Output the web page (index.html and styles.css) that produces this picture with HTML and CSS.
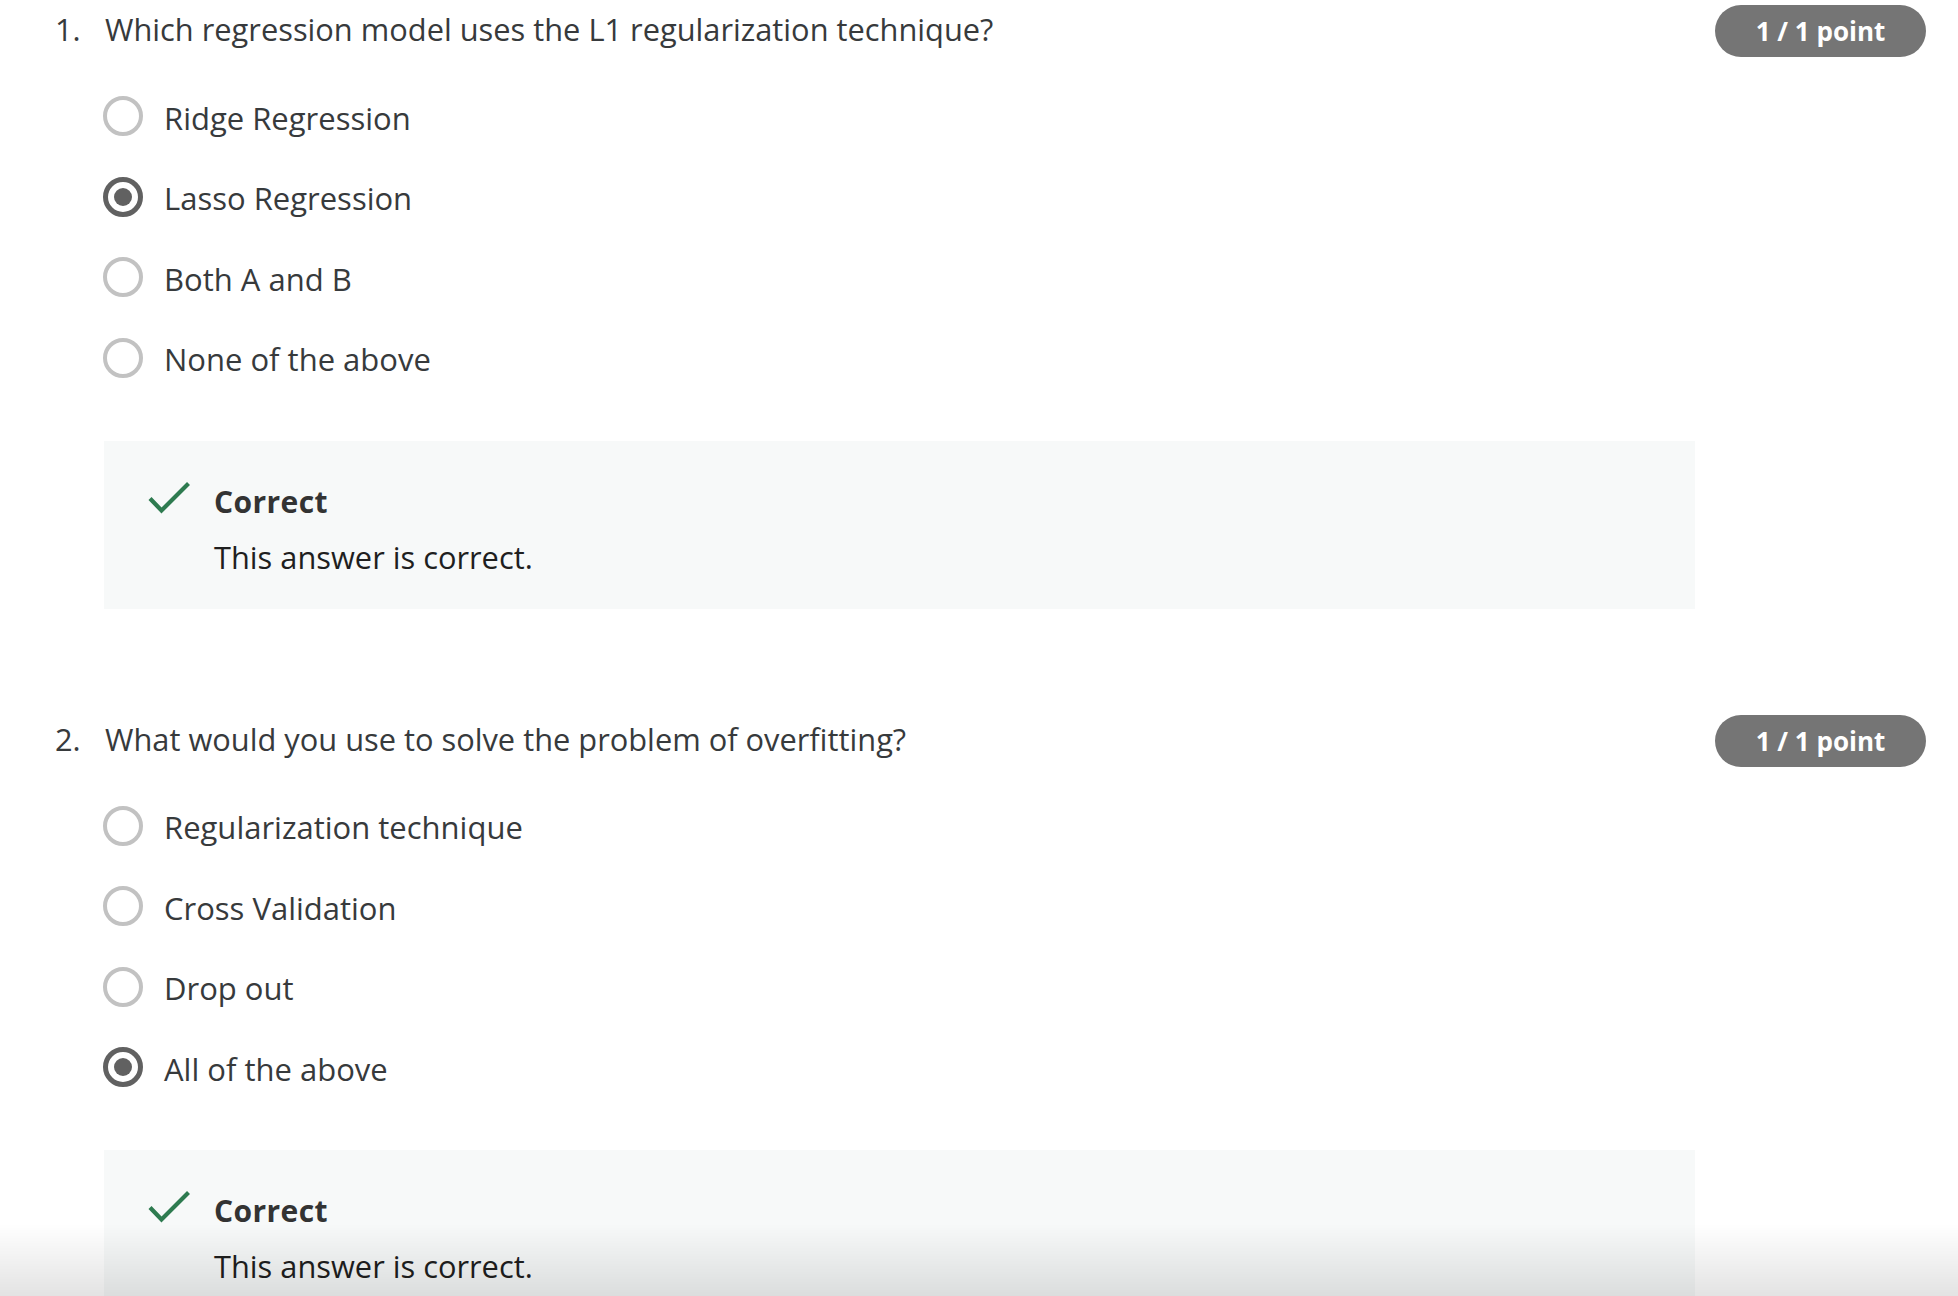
FILE: index.html
```html
<!DOCTYPE html>
<html lang="en">
<head>
<meta charset="utf-8">
<title>Quiz results</title>
<link rel="stylesheet" href="styles.css">
</head>
<body>
<main class="quiz">
  <section class="question">
    <div class="q-head">
      <div class="q-title"><span class="q-num">1.</span><span class="q-text">Which regression model uses the L1 regularization technique?</span></div>
      <div class="badge">1 / 1 point</div>
    </div>
    <ul class="options">
      <li class="option"><span class="radio"></span><span class="opt-text">Ridge Regression</span></li>
      <li class="option"><span class="radio checked"></span><span class="opt-text">Lasso Regression</span></li>
      <li class="option"><span class="radio"></span><span class="opt-text">Both A and B</span></li>
      <li class="option"><span class="radio"></span><span class="opt-text">None of the above</span></li>
    </ul>
    <div class="feedback">
      <svg class="check" width="42" height="32" viewBox="0 0 42 32"><path d="M2 16.5 L13.5 28.5 L40.5 1.5" fill="none" stroke="#2e7b50" stroke-width="4.2"/></svg>
      <div class="fb-body">
        <div class="fb-title">Correct</div>
        <div class="fb-text">This answer is correct.</div>
      </div>
    </div>
  </section>
  <section class="question">
    <div class="q-head">
      <div class="q-title"><span class="q-num">2.</span><span class="q-text">What would you use to solve the problem of overfitting?</span></div>
      <div class="badge">1 / 1 point</div>
    </div>
    <ul class="options">
      <li class="option"><span class="radio"></span><span class="opt-text">Regularization technique</span></li>
      <li class="option"><span class="radio"></span><span class="opt-text">Cross Validation</span></li>
      <li class="option"><span class="radio"></span><span class="opt-text">Drop out</span></li>
      <li class="option"><span class="radio checked"></span><span class="opt-text">All of the above</span></li>
    </ul>
    <div class="feedback">
      <svg class="check" width="42" height="32" viewBox="0 0 42 32"><path d="M2 16.5 L13.5 28.5 L40.5 1.5" fill="none" stroke="#2e7b50" stroke-width="4.2"/></svg>
      <div class="fb-body">
        <div class="fb-title">Correct</div>
        <div class="fb-text">This answer is correct.</div>
      </div>
    </div>
  </section>
</main>
<div class="bottom-fade"></div>
</body>
</html>
```

FILE: styles.css
```css
html, body {
  margin: 0;
  padding: 0;
  background: #ffffff;
  overflow: hidden;
}
body {
  font-family: "Open Sans", "Liberation Sans", sans-serif;
  color: #373a3c;
  height: 1296px;
}
.quiz {
  padding: 0 32px 0 55px;
}
.question {
  margin-bottom: 101px;
}
.q-head {
  display: flex;
  justify-content: space-between;
  align-items: flex-start;
  height: 57px;
}
.q-title {
  display: flex;
  margin-top: 9px;
  font-size: 30.8px;
  line-height: 40px;
  color: #373a3c;
}
.q-num {
  width: 50px;
  flex: none;
}
.badge {
  margin-top: 5px;
  width: 211px;
  height: 52px;
  box-sizing: border-box;
  padding-top: 1px;
  border-radius: 26px;
  background: #757575;
  color: #ffffff;
  font-weight: 700;
  font-size: 26px;
  line-height: 51px;
  text-align: center;
  flex: none;
}
.options {
  list-style: none;
  margin: 18.75px 0 0 48px;
  padding: 0;
}
.option {
  display: flex;
  align-items: center;
  height: 80.5px;
  gap: 21px;
}
.radio {
  box-sizing: border-box;
  width: 40px;
  height: 40px;
  border-radius: 50%;
  border: 4px solid #c2c2c2;
  flex: none;
  display: flex;
  align-items: center;
  justify-content: center;
}
.radio.checked {
  border: 5px solid #616161;
}
.radio.checked::after {
  content: "";
  width: 18px;
  height: 18px;
  border-radius: 50%;
  background: #616161;
}
.opt-text {
  font-size: 31px;
  line-height: 40px;
  color: #373a3c;
  padding-top: 3px;
}
.feedback {
  margin: 42.75px 231px 0 49px;
  height: 168px;
  box-sizing: border-box;
  background: #f7f9f9;
  padding: 41px 0 0 44px;
  display: flex;
  align-items: flex-start;
  gap: 24px;
}
.check {
  flex: none;
  margin-top: 0;
}
.fb-title {
  font-size: 30px;
  font-weight: 700;
  line-height: 40px;
  color: #333333;
  letter-spacing: 0.4px;
}
.fb-text {
  margin-top: 15px;
  font-size: 30.8px;
  line-height: 40px;
  color: #1f1f1f;
}
.bottom-fade {
  position: fixed;
  left: 0;
  right: 0;
  bottom: 0;
  height: 72px;
  background: linear-gradient(to bottom, rgba(0,0,0,0), rgba(0,0,0,0.11));
  pointer-events: none;
}
```
